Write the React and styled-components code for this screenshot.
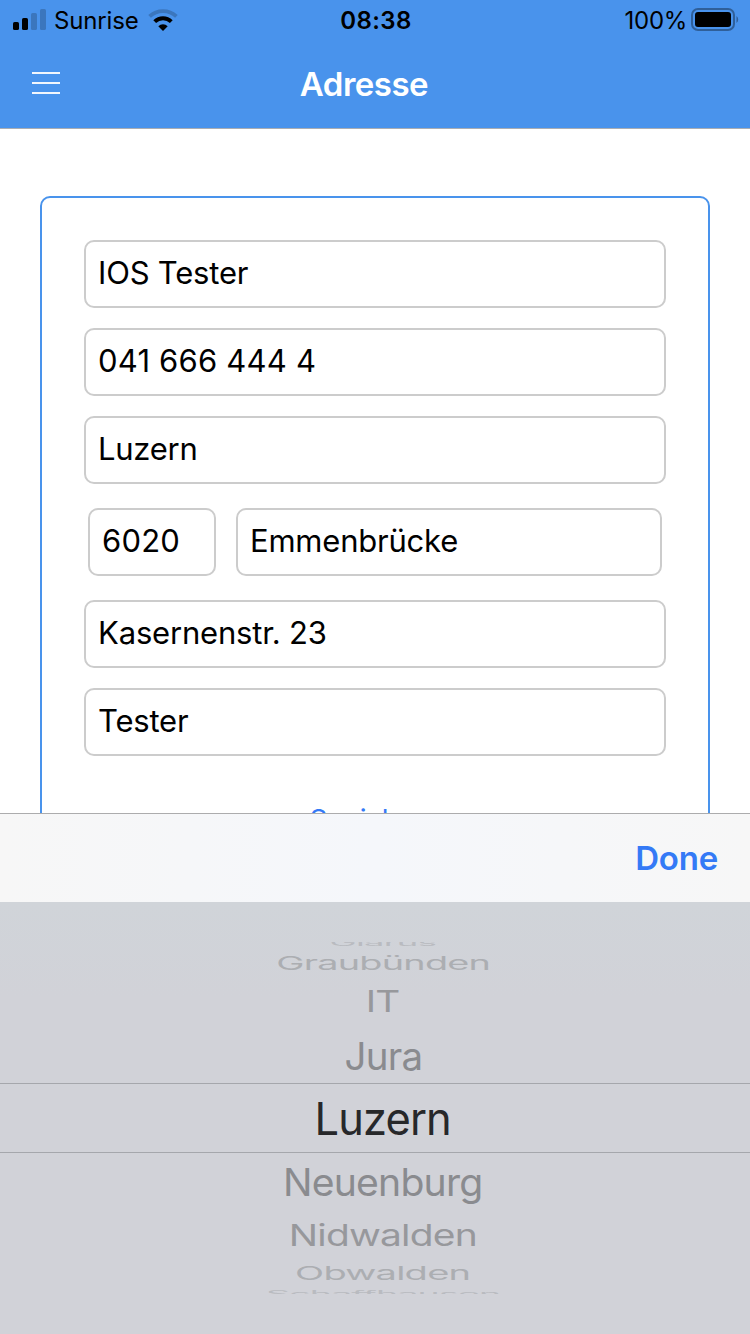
import React from 'react';
import styled, { createGlobalStyle } from 'styled-components';

const GlobalStyle = createGlobalStyle`
  * { box-sizing: border-box; }
  body { margin: 0; background: #fff; font-family: Inter, "Liberation Sans", sans-serif; }
`;

const Screen = styled.div`
  width: 750px;
  height: 1334px;
  display: flex;
  flex-direction: column;
  overflow: hidden;
  background: #fff;
`;

const Header = styled.header`
  height: 129px;
  flex: none;
  background: #4993ec;
  border-bottom: 1px solid #a9adb3;
`;

const StatusBar = styled.div`
  height: 40px;
  display: grid;
  grid-template-columns: 1fr auto 1fr;
  align-items: center;
  padding: 0 11px 0 13px;
  color: #000;
`;

const StatusGroup = styled.div`
  display: flex;
  align-items: center;
  justify-content: ${(p) => (p.$end ? 'flex-end' : 'flex-start')};
`;

const Label = styled.span`
  display: inline-block;
  white-space: pre;
  font-size: ${(p) => p.$size}px;
  font-weight: ${(p) => p.$weight || 400};
  letter-spacing: ${(p) => p.$spacing || 0}px;
  line-height: 1.2;
`;

const Carrier = styled(Label)`
  margin: 3px 9px 0 8px;
`;

const Clock = styled(Label)`
  margin: 3px 0 0 0;
`;

const Percent = styled(Label)`
  margin: 3px 4px 0 0;
`;

const NavBar = styled.div`
  height: 88px;
  display: grid;
  grid-template-columns: 1fr auto 1fr;
  align-items: center;
  padding: 0 32px;
  color: #fff;
`;

const MenuButton = styled.button`
  width: 28px;
  padding: 0;
  border: 0;
  background: none;
  display: flex;
  flex-direction: column;
  gap: 8px;
  margin-top: -2px;
`;

const MenuBar = styled.span`
  height: 2px;
  background: #f1f6fd;
`;

const Title = styled(Label)`
  margin: 2px 0 0 -22px;
`;

const Content = styled.main`
  height: 684px;
  flex: none;
  overflow: hidden;
  padding: 67px 40px 0;
`;

const Card = styled.form`
  height: 720px;
  border: 2px solid #4993ec;
  border-radius: 10px;
  padding: 42px;
  display: flex;
  flex-direction: column;
  gap: 20px;
`;

const Field = styled.div`
  height: 68px;
  flex: ${(p) => (p.$grow ? 1 : 'none')};
  width: ${(p) => (p.$width ? `${p.$width}px` : 'auto')};
  border: 2px solid #ccc;
  border-radius: 10px;
  padding: 0 12px 2px;
  display: flex;
  align-items: center;
  color: #000;
`;

const FieldRow = styled.div`
  display: flex;
  gap: 20px;
  padding: 4px;
`;

const SaveButton = styled.button`
  border: 0;
  background: none;
  padding: 0;
  margin-top: 28px;
  color: #347af6;
  font-family: inherit;
  text-align: center;
`;

const Toolbar = styled.div`
  height: 89px;
  flex: none;
  border-top: 1px solid #acacad;
  background: linear-gradient(90deg, #f7f7f7, #f5f7fb 50%, #f7f7f7);
  display: flex;
  align-items: center;
  justify-content: flex-end;
  padding: 2px 32px 0 0;
  color: #347af6;
`;

const Picker = styled.div`
  flex: 1;
  background: linear-gradient(#d0d4d9, #d1d2d8 22%);
  display: flex;
  flex-direction: column;
  align-items: stretch;
  padding-top: 40px;
`;

const Option = styled.div`
  height: ${(p) => p.$height}px;
  flex: none;
  display: flex;
  justify-content: center;
  align-items: center;
  padding-left: 16px;
  overflow: ${(p) => (p.$clip ? 'hidden' : 'visible')};
  color: ${(p) => p.$color};
  border: solid #a5a7ac;
  border-width: ${(p) => (p.$selected ? '1px 0' : 0)};
`;

const OptionText = styled.span`
  flex: none;
  font-size: 45px;
  line-height: 54px;
  letter-spacing: -0.9px;
  transform: translateY(${(p) => p.$shift || 0}px) scale(${(p) => p.$sx}, ${(p) => p.$sy});
`;

const Signal = () => (
  <svg width="33" height="22" viewBox="0 0 33 22">
    <rect x="0" y="13" width="6" height="8" rx="1.6" />
    <rect x="9" y="9" width="6" height="12" rx="1.6" />
    <rect x="18" y="4" width="6" height="17" rx="1.6" fill="#3b76bd" />
    <rect x="27" y="0" width="6" height="21" rx="1.6" fill="#3b76bd" />
  </svg>
);

const Wifi = () => (
  <svg width="30" height="22" viewBox="0 0 30 22" fill="none" overflow="visible">
    <path d="M1.6 7.4 A19.5 19.5 0 0 1 28.4 7.4" stroke="#3b76bd" strokeWidth="3.8" />
    <path d="M6.7 12.6 A12 12 0 0 1 23.3 12.6" stroke="#000" strokeWidth="4" />
    <path d="M10.3 17.2 A6.8 6.8 0 0 1 19.7 17.2 L15 22 Z" fill="#000" />
  </svg>
);

const Battery = () => (
  <svg width="48" height="24" viewBox="0 0 48 24">
    <rect x="1" y="1" width="42" height="21" rx="6" fill="none" stroke="#2f5f99" strokeWidth="2" />
    <rect x="4" y="4" width="36" height="15" rx="3" />
    <path d="M45.5 8 A4.5 4.5 0 0 1 45.5 15 Z" fill="#2f5f99" />
  </svg>
);

const options = [
  { text: 'Glarus', height: 4, clip: true, shift: -1, sx: 0.81, sy: 0.2, color: '#b9bbc0' },
  { text: 'Graubünden', height: 32, shift: 1, sx: 0.84, sy: 0.41, color: '#acaeb2' },
  { text: 'IT', height: 46, shift: 0, sx: 0.86, sy: 0.66, color: '#97989c' },
  { text: 'Jura', height: 59, shift: 3, sx: 0.855, sy: 0.84, color: '#8a8b8f' },
  { text: 'Luzern', height: 70, shift: 1, sx: 0.965, sy: 1, color: '#27282a', selected: true },
  { text: 'Neuenburg', height: 60, shift: 0, sx: 0.87, sy: 0.84, color: '#8a8b8f' },
  { text: 'Nidwalden', height: 46, shift: -1, sx: 0.865, sy: 0.66, color: '#97989c' },
  { text: 'Obwalden', height: 31, shift: -2, sx: 0.845, sy: 0.41, color: '#acaeb2' },
  { text: 'Schaffhausen', height: 4, clip: true, shift: 1.5, sx: 0.83, sy: 0.2, color: '#b9bbc0' },
];

export default function App() {
  return (
    <Screen>
      <GlobalStyle />
      <Header>
        <StatusBar>
          <StatusGroup>
            <Signal />
            <Carrier $size={24} $spacing={-0.15}>Sunrise</Carrier>
            <Wifi />
          </StatusGroup>
          <Clock $size={24} $weight={600} $spacing={0.4}>08:38</Clock>
          <StatusGroup $end>
            <Percent $size={24} $spacing={-0.3}>100%</Percent>
            <Battery />
          </StatusGroup>
        </StatusBar>
        <NavBar>
          <MenuButton aria-label="Menu"><MenuBar /><MenuBar /><MenuBar /></MenuButton>
          <Title $size={33} $weight={600} $spacing={-0.5}>Adresse</Title>
        </NavBar>
      </Header>
      <Content>
        <Card>
          <Field><Label $size={31} $spacing={-0.2}>IOS Tester</Label></Field>
          <Field><Label $size={31} $spacing={0.2}>041 666 444 4</Label></Field>
          <Field><Label $size={31} $spacing={-0.25}>Luzern</Label></Field>
          <FieldRow>
            <Field $width={128}><Label $size={31} $spacing={0.2}>6020</Label></Field>
            <Field $grow><Label $size={31} $spacing={-0.22}>Emmenbrücke</Label></Field>
          </FieldRow>
          <Field><Label $size={31} $spacing={-0.18}>Kasernenstr. 23</Label></Field>
          <Field><Label $size={31} $spacing={-0.2}>Tester</Label></Field>
          <SaveButton type="button"><Label $size={28} $spacing={-0.4}>Speichern</Label></SaveButton>
        </Card>
      </Content>
      <Toolbar><Label $size={33} $weight={600} $spacing={-0.2}>Done</Label></Toolbar>
      <Picker>
        {options.map((o) => (
          <Option key={o.text} $height={o.height} $clip={o.clip} $color={o.color} $selected={o.selected}>
            <OptionText $shift={o.shift} $sx={o.sx} $sy={o.sy}>{o.text}</OptionText>
          </Option>
        ))}
      </Picker>
    </Screen>
  );
}
